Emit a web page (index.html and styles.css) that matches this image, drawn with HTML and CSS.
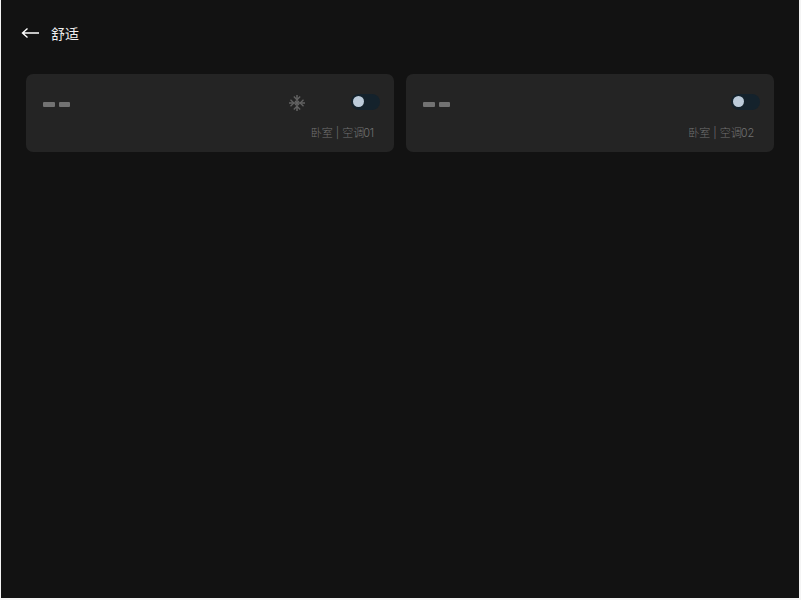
FILE: index.html
```html
<!DOCTYPE html>
<html lang="zh">
<head>
<meta charset="utf-8">
<title>舒适</title>
<link rel="stylesheet" href="styles.css">
</head>
<body>
<main class="app">
  <header class="top">
    <svg class="back" width="18" height="12" viewBox="0 0 18 12" aria-hidden="true"><path d="M18 6H2M6.500 1.500 1.500 6l5 4.500" fill="none" stroke="#fff" stroke-width="1.400"/></svg>
    <h1 class="title">舒适</h1>
  </header>
  <section class="cards">
    <article class="card">
      <div class="row">
        <div class="dashes"><span class="dash"></span><span class="dash"></span></div>
        <svg class="snow" width="16" height="16" viewBox="0 0 16 16" aria-hidden="true">
          <g fill="none" stroke="#626262" stroke-width="1.300">
            <path d="M8 0v16M0 8h16" stroke-width="1.500"/>
            <path d="M4.800 1.500 8 4.800l3.200-3.300M4.800 14.500 8 11.200l3.200 3.300M1.500 4.800 4.800 8l-3.300 3.200M14.500 4.800 11.200 8l3.300 3.200"/>
            <path d="M6 6l4 4M10 6l-4 4" stroke-width="1.200"/>
          </g>
        </svg>
        <div class="toggle"><span class="knob"></span></div>
      </div>
      <p class="label">卧室 | 空调<span class="num">01</span></p>
    </article>
    <article class="card">
      <div class="row">
        <div class="dashes"><span class="dash"></span><span class="dash"></span></div>
        <div class="toggle"><span class="knob"></span></div>
      </div>
      <p class="label">卧室 | 空调<span class="num">02</span></p>
    </article>
  </section>
</main>
</body>
</html>
```
FILE: styles.css
```css
* { box-sizing: border-box; }
html, body { margin: 0; height: 100%; background: #f4f4f4; }
body { font-family: "Inter", "Noto Sans CJK SC", sans-serif; overflow: hidden; }
.app {
  width: 798px;
  height: 598px;
  margin-left: 1px;
  background: #121212;
  padding: 0 25px;
}
.top {
  height: 74px;
  display: flex;
  align-items: center;
  padding: 0 0 8px 0;
  margin-left: -5px;
}
.back { display: block; margin-right: 12px; }
.title {
  margin: 0;
  font-size: 14px;
  font-weight: 400;
  color: #f0f0f0;
  font-family: "Noto Sans CJK SC", sans-serif;
}
.cards { display: grid; grid-template-columns: 368px 368px; gap: 12px; }
.card {
  height: 78px;
  background: #242424;
  border-radius: 7px;
  padding: 19px 14px 0 17px;
}
.row { display: flex; align-items: center; height: 18px; }
.dashes { display: flex; gap: 4px; margin-top: 4px; }
.dash { width: 11.500px; height: 5px; background: #727272; border-radius: 1px; }
.snow { margin-left: auto; margin-right: 46px; margin-top: 2px; }
.toggle {
  margin-left: auto;
  width: 29px;
  height: 16px;
  border-radius: 8px;
  background: #14222c;
  padding: 2px;
}
.snow + .toggle { margin-left: 0; }
.knob { display: block; width: 11px; height: 11px; margin: 0; border-radius: 50%; background: #bccbda; }
.label {
  margin: 14px 6px 0 0;
  text-align: right;
  font-size: 11px;
  line-height: 16px;
  font-weight: 300;
  color: #727272;
}
.num { margin-left: -1px; letter-spacing: -0.2px; }
```
